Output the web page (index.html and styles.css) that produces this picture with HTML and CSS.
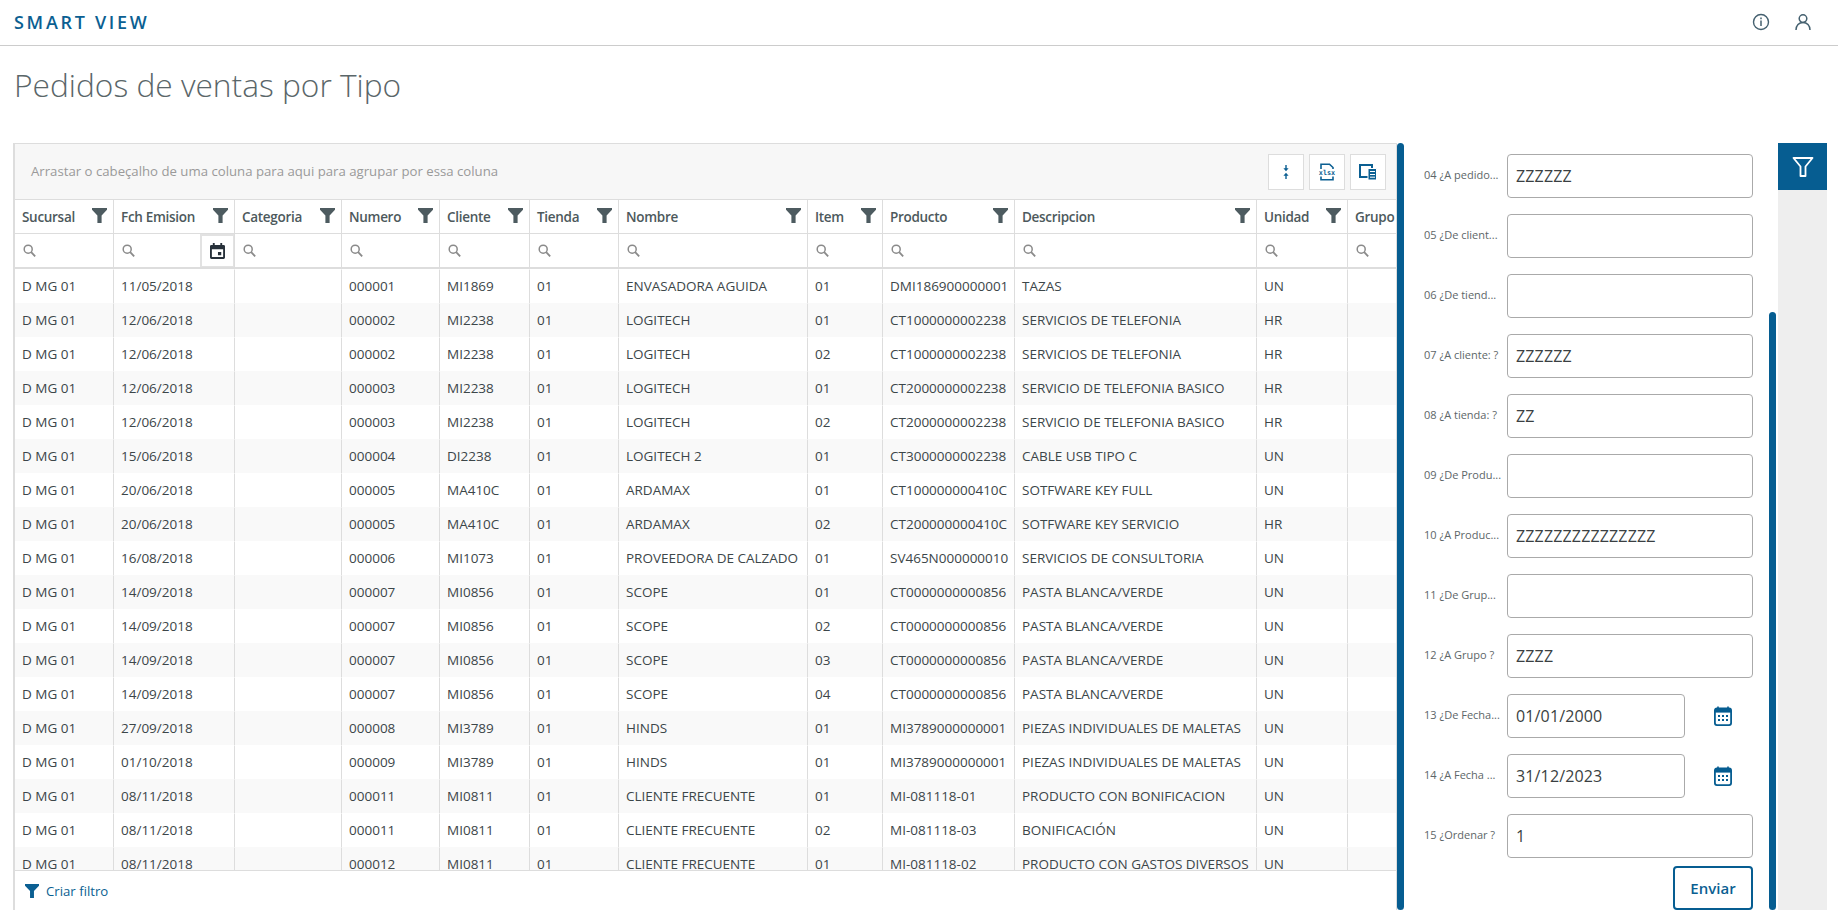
FILE: index.html
```html
<!DOCTYPE html>
<html lang="pt">
<head>
<meta charset="utf-8">
<title>Smart View</title>
<link rel="stylesheet" href="styles.css">
</head>
<body>
<svg class="defs" width="0" height="0" aria-hidden="true">
  <symbol id="funnel" viewBox="0 0 15 15"><path d="M0 0h15v1.8L9.6 7.6V15H5.4V7.6L0 1.8z"/></symbol>
  <symbol id="search" viewBox="0 0 13 13"><circle cx="5.2" cy="5.2" r="4" fill="none" stroke="currentColor" stroke-width="1.5"/><path d="M8.2 8.2L12.2 12.4" stroke="currentColor" stroke-width="1.8" fill="none"/></symbol>
  <symbol id="cal" viewBox="0 0 18 20"><path d="M4 0.5v3M14 0.5v3" stroke="currentColor" stroke-width="1.6" fill="none"/><rect x="0.9" y="2.4" width="16.2" height="16.7" rx="2" fill="none" stroke="currentColor" stroke-width="1.8"/><path d="M1 2.6h16v4H1z" fill="currentColor"/><path d="M4 9h2v2H4zM8 9h2v2H8zM12 9h2v2h-2zM4 13h2v2H4zM8 13h2v2H8zM12 13h2v2h-2z" fill="currentColor"/></symbol>
</svg>

<header class="topbar">
  <span class="brand">SMART VIEW</span>
  <div class="top-icons">
    <svg class="top-icon" viewBox="0 0 18 18"><circle cx="9" cy="9" r="7.5" fill="none" stroke="currentColor" stroke-width="1.4"/><path d="M9 7.6v5.4M9 4.6v1.6" stroke="currentColor" stroke-width="1.5" fill="none"/></svg>
    <svg class="top-icon" viewBox="0 0 18 18"><circle cx="9" cy="5.6" r="3.8" fill="none" stroke="currentColor" stroke-width="1.5"/><path d="M2 17c0-4.4 3-7.6 7-7.6s7 3.2 7 7.6" fill="none" stroke="currentColor" stroke-width="1.5"/></svg>
  </div>
</header>

<h1 class="page-title">Pedidos de ventas por Tipo</h1>

<main class="workspace">
  <section class="grid">
    <div class="group-panel">
      <span class="group-hint">Arrastar o cabeçalho de uma coluna para aqui para agrupar por essa coluna</span>
      <div class="tools">
        <button class="tool" type="button"><svg class="tool-icon" viewBox="0 0 20 20"><path d="M9.300 3h1.400v3.200H12.600L10 9.200 7.400 6.200H9.300zM10 10.800L12.600 13.800H10.700V17H9.300V13.800H7.400z" fill="currentColor"/></svg></button>
        <button class="tool" type="button"><svg class="tool-icon" viewBox="0 0 20 20"><path d="M4 7V2.200h8.500L16 5.500V7M4 14.500v3.300h12v-3.300" fill="none" stroke="currentColor" stroke-width="1.600"/><text x="10" y="13" class="xlsx">xlsx</text></svg></button>
        <button class="tool" type="button"><svg class="tool-icon" viewBox="0 0 20 20"><path d="M2 3h12v12H2z" fill="none" stroke="currentColor" stroke-width="2"/><path d="M10 6.500h8.500V18H10z" fill="currentColor" stroke="#fff" stroke-width="1"/><path d="M12 9.500h5M12 12.500h5M12 15.200h5" stroke="#fff" stroke-width="1" fill="none"/></svg></button>
      </div>
    </div>
    <div class="table-wrap">
      <table class="data">
        <colgroup>
          <col class="c1"><col class="c2"><col class="c3"><col class="c4"><col class="c5"><col class="c6"><col class="c7"><col class="c8"><col class="c9"><col class="c10"><col class="c11"><col class="c12">
        </colgroup>
        <thead>
          <tr class="head-row">
            <th><span class="th-in">Sucursal<svg class="funnel"><use href="#funnel"/></svg></span></th>
            <th><span class="th-in">Fch Emision<svg class="funnel"><use href="#funnel"/></svg></span></th>
            <th><span class="th-in">Categoria<svg class="funnel"><use href="#funnel"/></svg></span></th>
            <th><span class="th-in">Numero<svg class="funnel"><use href="#funnel"/></svg></span></th>
            <th><span class="th-in">Cliente<svg class="funnel"><use href="#funnel"/></svg></span></th>
            <th><span class="th-in">Tienda<svg class="funnel"><use href="#funnel"/></svg></span></th>
            <th><span class="th-in">Nombre<svg class="funnel"><use href="#funnel"/></svg></span></th>
            <th><span class="th-in">Item<svg class="funnel"><use href="#funnel"/></svg></span></th>
            <th><span class="th-in">Producto<svg class="funnel"><use href="#funnel"/></svg></span></th>
            <th><span class="th-in">Descripcion<svg class="funnel"><use href="#funnel"/></svg></span></th>
            <th><span class="th-in">Unidad<svg class="funnel"><use href="#funnel"/></svg></span></th>
            <th><span class="th-in">Grupo</span></th>
          </tr>
          <tr class="filter-row">
            <td><svg class="search"><use href="#search"/></svg></td>
            <td class="date-filter"><div class="date-in"><svg class="search"><use href="#search"/></svg><span class="date-btn"><svg class="event" viewBox="0 0 16 17"><path d="M3 0h2v2h6V0h2v2h1.500A1.500 1.500 0 0 1 16 3.500V15.500A1.500 1.500 0 0 1 14.500 17h-13A1.500 1.500 0 0 1 0 15.500V3.500A1.500 1.500 0 0 1 1.500 2H3zM2 6.500V15h12V6.500zM8.500 9.500H12V13H8.500z"/></svg></span></div></td>
            <td><svg class="search"><use href="#search"/></svg></td>
            <td><svg class="search"><use href="#search"/></svg></td>
            <td><svg class="search"><use href="#search"/></svg></td>
            <td><svg class="search"><use href="#search"/></svg></td>
            <td><svg class="search"><use href="#search"/></svg></td>
            <td><svg class="search"><use href="#search"/></svg></td>
            <td><svg class="search"><use href="#search"/></svg></td>
            <td><svg class="search"><use href="#search"/></svg></td>
            <td><svg class="search"><use href="#search"/></svg></td>
            <td><svg class="search"><use href="#search"/></svg></td>
          </tr>
        </thead>
        <tbody>
          <tr><td>D MG 01</td><td>11/05/2018</td><td></td><td>000001</td><td>MI1869</td><td>01</td><td>ENVASADORA AGUIDA</td><td>01</td><td>DMI186900000001</td><td>TAZAS</td><td>UN</td><td></td></tr>
          <tr><td>D MG 01</td><td>12/06/2018</td><td></td><td>000002</td><td>MI2238</td><td>01</td><td>LOGITECH</td><td>01</td><td>CT1000000002238</td><td>SERVICIOS DE TELEFONIA</td><td>HR</td><td></td></tr>
          <tr><td>D MG 01</td><td>12/06/2018</td><td></td><td>000002</td><td>MI2238</td><td>01</td><td>LOGITECH</td><td>02</td><td>CT1000000002238</td><td>SERVICIOS DE TELEFONIA</td><td>HR</td><td></td></tr>
          <tr><td>D MG 01</td><td>12/06/2018</td><td></td><td>000003</td><td>MI2238</td><td>01</td><td>LOGITECH</td><td>01</td><td>CT2000000002238</td><td>SERVICIO DE TELEFONIA BASICO</td><td>HR</td><td></td></tr>
          <tr><td>D MG 01</td><td>12/06/2018</td><td></td><td>000003</td><td>MI2238</td><td>01</td><td>LOGITECH</td><td>02</td><td>CT2000000002238</td><td>SERVICIO DE TELEFONIA BASICO</td><td>HR</td><td></td></tr>
          <tr><td>D MG 01</td><td>15/06/2018</td><td></td><td>000004</td><td>DI2238</td><td>01</td><td>LOGITECH 2</td><td>01</td><td>CT3000000002238</td><td>CABLE USB TIPO C</td><td>UN</td><td></td></tr>
          <tr><td>D MG 01</td><td>20/06/2018</td><td></td><td>000005</td><td>MA410C</td><td>01</td><td>ARDAMAX</td><td>01</td><td>CT100000000410C</td><td>SOTFWARE KEY FULL</td><td>UN</td><td></td></tr>
          <tr><td>D MG 01</td><td>20/06/2018</td><td></td><td>000005</td><td>MA410C</td><td>01</td><td>ARDAMAX</td><td>02</td><td>CT200000000410C</td><td>SOTFWARE KEY SERVICIO</td><td>HR</td><td></td></tr>
          <tr><td>D MG 01</td><td>16/08/2018</td><td></td><td>000006</td><td>MI1073</td><td>01</td><td>PROVEEDORA DE CALZADO</td><td>01</td><td>SV465N000000010</td><td>SERVICIOS DE CONSULTORIA</td><td>UN</td><td></td></tr>
          <tr><td>D MG 01</td><td>14/09/2018</td><td></td><td>000007</td><td>MI0856</td><td>01</td><td>SCOPE</td><td>01</td><td>CT0000000000856</td><td>PASTA BLANCA/VERDE</td><td>UN</td><td></td></tr>
          <tr><td>D MG 01</td><td>14/09/2018</td><td></td><td>000007</td><td>MI0856</td><td>01</td><td>SCOPE</td><td>02</td><td>CT0000000000856</td><td>PASTA BLANCA/VERDE</td><td>UN</td><td></td></tr>
          <tr><td>D MG 01</td><td>14/09/2018</td><td></td><td>000007</td><td>MI0856</td><td>01</td><td>SCOPE</td><td>03</td><td>CT0000000000856</td><td>PASTA BLANCA/VERDE</td><td>UN</td><td></td></tr>
          <tr><td>D MG 01</td><td>14/09/2018</td><td></td><td>000007</td><td>MI0856</td><td>01</td><td>SCOPE</td><td>04</td><td>CT0000000000856</td><td>PASTA BLANCA/VERDE</td><td>UN</td><td></td></tr>
          <tr><td>D MG 01</td><td>27/09/2018</td><td></td><td>000008</td><td>MI3789</td><td>01</td><td>HINDS</td><td>01</td><td>MI3789000000001</td><td>PIEZAS INDIVIDUALES DE MALETAS</td><td>UN</td><td></td></tr>
          <tr><td>D MG 01</td><td>01/10/2018</td><td></td><td>000009</td><td>MI3789</td><td>01</td><td>HINDS</td><td>01</td><td>MI3789000000001</td><td>PIEZAS INDIVIDUALES DE MALETAS</td><td>UN</td><td></td></tr>
          <tr><td>D MG 01</td><td>08/11/2018</td><td></td><td>000011</td><td>MI0811</td><td>01</td><td>CLIENTE FRECUENTE</td><td>01</td><td>MI-081118-01</td><td>PRODUCTO CON BONIFICACION</td><td>UN</td><td></td></tr>
          <tr><td>D MG 01</td><td>08/11/2018</td><td></td><td>000011</td><td>MI0811</td><td>01</td><td>CLIENTE FRECUENTE</td><td>02</td><td>MI-081118-03</td><td>BONIFICACIÓN</td><td>UN</td><td></td></tr>
          <tr><td>D MG 01</td><td>08/11/2018</td><td></td><td>000012</td><td>MI0811</td><td>01</td><td>CLIENTE FRECUENTE</td><td>01</td><td>MI-081118-02</td><td>PRODUCTO CON GASTOS DIVERSOS</td><td>UN</td><td></td></tr>
        </tbody>
      </table>
    </div>
    <div class="grid-footer">
      <svg class="footer-funnel"><use href="#funnel"/></svg>
      <span>Criar filtro</span>
    </div>
  </section>
  <div class="thumb thumb-full"></div>

  <form class="params">
    <div class="param"><label>04 ¿A pedido...</label><input class="field" type="text" value="ZZZZZZ"></div>
    <div class="param"><label>05 ¿De client...</label><input class="field" type="text" value=""></div>
    <div class="param"><label>06 ¿De tiend...</label><input class="field" type="text" value=""></div>
    <div class="param"><label>07 ¿A cliente: ?</label><input class="field" type="text" value="ZZZZZZ"></div>
    <div class="param"><label>08 ¿A tienda: ?</label><input class="field" type="text" value="ZZ"></div>
    <div class="param"><label>09 ¿De Produ...</label><input class="field" type="text" value=""></div>
    <div class="param"><label>10 ¿A Produc...</label><input class="field" type="text" value="ZZZZZZZZZZZZZZZ"></div>
    <div class="param"><label>11 ¿De Grup...</label><input class="field" type="text" value=""></div>
    <div class="param"><label>12 ¿A Grupo ?</label><input class="field" type="text" value="ZZZZ"></div>
    <div class="param"><label>13 ¿De Fecha...</label><input class="field field-date" type="text" value="01/01/2000"><span class="cal-slot"><svg class="cal"><use href="#cal"/></svg></span></div>
    <div class="param"><label>14 ¿A Fecha ...</label><input class="field field-date" type="text" value="31/12/2023"><span class="cal-slot"><svg class="cal"><use href="#cal"/></svg></span></div>
    <div class="param"><label>15 ¿Ordenar ?</label><input class="field" type="text" value="1"></div>
    <div class="actions"><button class="send" type="button">Enviar</button></div>
  </form>
  <div class="thumb thumb-part"></div>

  <aside class="rail">
    <div class="rail-tab"><svg class="rail-icon" viewBox="0 0 22 20"><path d="M1.500 1h19L13.500 9.500V19h-5V9.500z" fill="none" stroke="currentColor" stroke-width="1.800" stroke-linejoin="round"/></svg></div>
  </aside>
</main>
</body>
</html>
```

FILE: styles.css
```css
* { box-sizing: border-box; }

html, body {
  margin: 0;
  height: 100%;
  overflow: hidden;
  background: #fff;
}

body {
  font-family: "Open Sans", "Noto Sans", sans-serif;
  color: #3c4649;
}

.defs { position: absolute; }

.topbar {
  height: 46px;
  border-bottom: 1px solid #ccc;
  display: flex;
  align-items: center;
  justify-content: space-between;
  padding: 0 26px 1px 14px;
}

.brand {
  font-size: 18px;
  font-weight: 600;
  letter-spacing: 2.700px;
  color: #0b5f92;
}

.top-icons {
  display: flex;
  gap: 24px;
  color: #44606f;
}

.top-icon {
  width: 18px;
  height: 18px;
  display: block;
}

.page-title {
  margin: 0;
  height: 97px;
  padding: 19px 0 0 14px;
  font-size: 31.700px;
  line-height: 40px;
  font-weight: 300;
  color: #5a6669;
}

.workspace {
  display: flex;
  height: 767px;
  padding-left: 13px;
}

.grid {
  width: 1384px;
  flex: none;
  display: flex;
  flex-direction: column;
  border-left: 2px solid #ddd;
  border-right: 1px solid #ddd;
  border-top: 1px solid #ddd;
}

.group-panel {
  height: 56px;
  flex: none;
  background: #f7f7f7;
  border-bottom: 1px solid #ddd;
  display: flex;
  align-items: center;
  justify-content: space-between;
  padding: 0 10px 0 16px;
}

.group-hint {
  font-size: 13.200px;
  color: #9a9a9a;
  margin-top: -2px;
}

.tools { display: flex; gap: 5px; }

.tool {
  width: 36px;
  height: 36px;
  padding: 0;
  background: #fff;
  border: 1px solid #ddd;
  display: flex;
  align-items: center;
  justify-content: center;
  color: #0b5f92;
}

.tool-icon { width: 20px; height: 20px; display: block; }

.xlsx {
  font-family: "DejaVu Sans Mono", monospace;
  font-size: 6.800px;
  font-weight: 700;
  text-anchor: middle;
  fill: currentColor;
}

.table-wrap {
  flex: 1;
  min-height: 0;
  overflow: hidden;
}

.data {
  table-layout: fixed;
  border-collapse: separate;
  border-spacing: 0;
  width: 1433px;
  font-size: 13.500px;
}

.c1 { width: 99px; }
.c2 { width: 121px; }
.c3 { width: 107px; }
.c4 { width: 98px; }
.c5 { width: 90px; }
.c6 { width: 89px; }
.c7 { width: 189px; }
.c8 { width: 75px; }
.c9 { width: 132px; }
.c10 { width: 242px; }
.c11 { width: 91px; }
.c12 { width: 100px; }

.data th,
.data td {
  padding: 0 6px 0 7px;
  border-right: 1px solid #ddd;
  white-space: nowrap;
  overflow: hidden;
  text-align: left;
}

.head-row th {
  height: 34px;
  border-bottom: 1px solid #ddd;
  font-weight: 600;
  letter-spacing: -0.300px;
  color: #4d595c;
}

.th-in {
  display: flex;
  align-items: center;
  justify-content: space-between;
}

.funnel {
  width: 15px;
  height: 15px;
  fill: #4d5b60;
  flex: none;
  margin-top: -2px;
}

.filter-row td {
  height: 35px;
  border-bottom: 2px solid #ddd;
  padding-left: 8px;
}

.search {
  width: 13px;
  height: 13px;
  color: #8a8a8a;
  display: block;
}

.filter-row .date-filter { padding: 0 0 0 8px; }

.date-in {
  display: flex;
  align-items: center;
  justify-content: space-between;
}

.date-btn {
  width: 34px;
  height: 33px;
  border: 2px solid #e2e2e2;
  border-right-width: 1px;
  border-bottom-width: 1px;
  display: flex;
  align-items: center;
  justify-content: center;
}

.event { width: 15px; height: 16px; fill: #27313a; display: block; }

.data tbody td {
  height: 34px;
  border-top: 1px solid #fff;
  padding-bottom: 1px;
  color: #3c4649;
}

.data tbody tr:nth-child(even) td {
  background: #f9f9f9;
  border-top-color: #f9f9f9;
}

.grid-footer {
  height: 40px;
  flex: none;
  border-top: 1px solid #ddd;
  display: flex;
  align-items: center;
  gap: 7px;
  padding: 0 0 0 10px;
  font-size: 13.200px;
  color: #0b5f92;
}

.footer-funnel { width: 14px; height: 14px; fill: #0b5f92; flex: none; }

.thumb {
  width: 7px;
  flex: none;
  background: #065d91;
  border-radius: 4px;
}

.thumb-part {
  align-self: flex-end;
  height: 598px;
}

.params {
  width: 365px;
  flex: none;
  padding: 11px 16px 0 20px;
  display: flex;
  flex-direction: column;
  gap: 16px;
}

.param {
  display: flex;
  align-items: center;
  height: 44px;
  flex: none;
}

.param label {
  width: 83px;
  flex: none;
  font-size: 11px;
  color: #5d6668;
  white-space: nowrap;
  overflow: hidden;
  margin-top: -4px;
}

.field {
  flex: 1;
  min-width: 0;
  height: 44px;
  border: 1px solid #aaa;
  border-radius: 4px;
  padding: 0 8px;
  font: 16px "Open Sans", "Noto Sans", sans-serif;
  letter-spacing: 0.150px;
  color: #3a3f42;
  background: #fff;
}

.field-date { flex: 0 0 178px; }

.cal-slot {
  flex: 1;
  display: flex;
  justify-content: center;
  padding-left: 8px;
}

.cal { width: 18px; height: 20px; color: #065d91; display: block; }

.actions {
  display: flex;
  justify-content: flex-end;
  margin-top: -8px;
}

.send {
  width: 80px;
  height: 44px;
  border: 2px solid #065d91;
  border-radius: 4px;
  background: #fff;
  color: #0b5f92;
  font: 600 15px "Open Sans", "Noto Sans", sans-serif;
}

.rail {
  width: 49px;
  margin-left: 2px;
  flex: none;
  background: #eee;
}

.rail-tab {
  height: 47px;
  background: #065d91;
  color: #fff;
  display: flex;
  align-items: center;
  justify-content: center;
}

.rail-icon { width: 22px; height: 20px; display: block; }
```
